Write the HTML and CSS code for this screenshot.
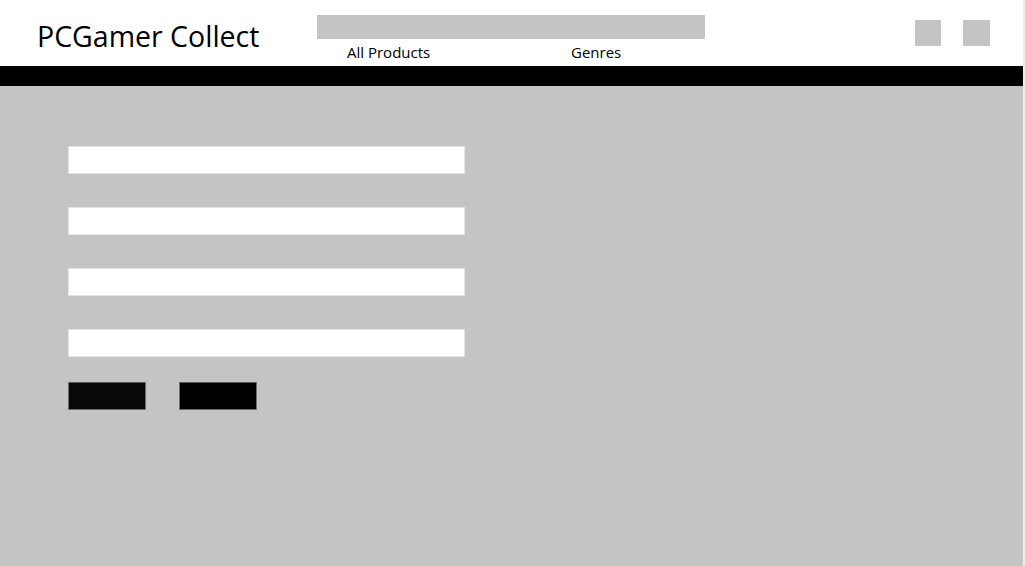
FILE: index.html
```html
<!DOCTYPE html>
<html lang="en">
<head>
<meta charset="utf-8">
<title>PCGamer Collect</title>
<link rel="stylesheet" href="styles.css">
</head>
<body>
<div class="page">
  <header class="header">
    <div class="logo">PCGamer Collect</div>
    <div class="center">
      <div class="search"></div>
      <nav class="nav">
        <a class="nav-link nav-products" href="#">All Products</a>
        <a class="nav-link nav-genres" href="#">Genres</a>
      </nav>
    </div>
    <div class="icons">
      <span class="icon"></span>
      <span class="icon"></span>
    </div>
  </header>
  <div class="bar"></div>
  <main class="main">
    <form class="form">
      <input class="field" type="text">
      <input class="field" type="text">
      <input class="field" type="text">
      <input class="field" type="text">
      <div class="buttons">
        <button class="btn btn-a" type="button"></button>
        <button class="btn btn-b" type="button"></button>
      </div>
    </form>
  </main>
</div>
</body>
</html>
```

FILE: styles.css
```css
* { box-sizing: border-box; }
html, body { margin: 0; padding: 0; }
body {
  background: #ececec;
  font-family: "Open Sans", "Liberation Sans", sans-serif;
  color: #000;
}
.page {
  width: 1023px;
  height: 566px;
  display: flex;
  flex-direction: column;
  background: #c4c4c4;
}
.header {
  height: 66px;
  background: #fff;
  display: flex;
  align-items: flex-start;
  padding-left: 37px;
  padding-right: 33px;
}
.logo {
  width: 280px;
  font-size: 28.5px;
  line-height: 1;
  padding-top: 22px;
  letter-spacing: 0;
}
.center {
  width: 388px;
  padding-top: 15px;
  display: flex;
  flex-direction: column;
}
.search {
  height: 24px;
  background: #c4c4c4;
}
.nav {
  display: flex;
  padding-left: 30px;
  padding-top: 4px;
}
.nav-link {
  color: #000;
  text-decoration: none;
  font-size: 15px;
  line-height: 18px;
}
.nav-products { width: 224px; }
.icons {
  margin-left: auto;
  display: flex;
  gap: 22px;
  padding-top: 20px;
}
.icon {
  width: 26px;
  height: 26px;
  background: #c4c4c4;
}
.icon + .icon { width: 27px; }
.bar {
  height: 20px;
  background: #000;
}
.main {
  flex: 1;
  padding: 60px 0 0 68px;
}
.form {
  display: flex;
  flex-direction: column;
  gap: 33px;
  width: 397px;
}
.field {
  height: 28px;
  width: 397px;
  margin: 0;
  padding: 0;
  background: #fff;
  border: 1px solid #e4e4e4;
  outline: none;
}
.buttons {
  display: flex;
  gap: 33px;
  margin-top: -8px;
}
.btn {
  width: 78px;
  height: 28px;
  margin: 0;
  padding: 0;
  border: 1px solid #6a6a6a;
  border-top-color: #5a5a5a;
}
.btn-a { background: #080808; }
.btn-b { background: #000; }
```
